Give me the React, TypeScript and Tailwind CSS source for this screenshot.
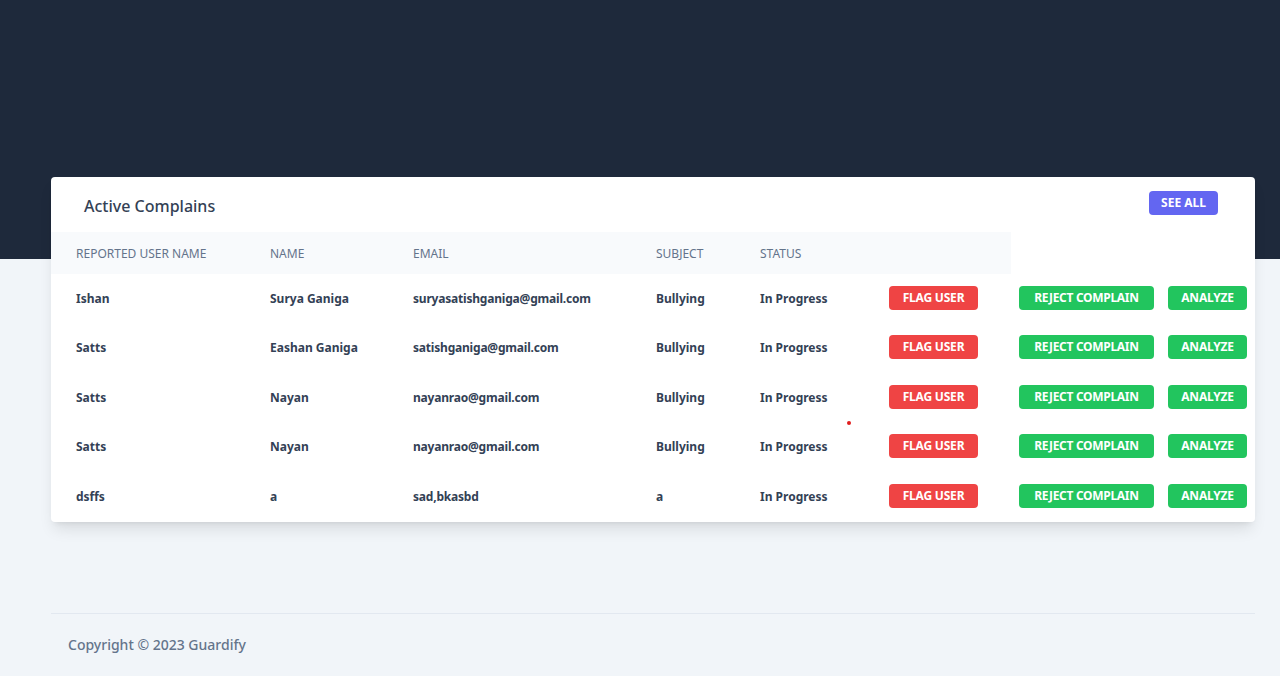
import React from "react";

type Complain = {
  reported: string;
  name: string;
  email: string;
  subject: string;
  status: string;
};

const complains: Complain[] = [
  { reported: "Ishan", name: "Surya Ganiga", email: "suryasatishganiga@gmail.com", subject: "Bullying", status: "In Progress" },
  { reported: "Satts", name: "Eashan Ganiga", email: "satishganiga@gmail.com", subject: "Bullying", status: "In Progress" },
  { reported: "Satts", name: "Nayan", email: "nayanrao@gmail.com", subject: "Bullying", status: "In Progress" },
  { reported: "Satts", name: "Nayan", email: "nayanrao@gmail.com", subject: "Bullying", status: "In Progress" },
  { reported: "dsffs", name: "a", email: "sad,bkasbd", subject: "a", status: "In Progress" },
];

const headers = ["Reported User Name", "Name", "Email", "Subject", "Status"];
const widths = ["w-[194px]", "w-[143px]", "w-[243px]", "w-[104px]", "w-[129px]"];

const App = () => {
  return (
    <div className="bg-[#f1f5f9] font-['Noto_Sans',sans-serif]">
      {/* dark header */}
      <div className="h-[259px] bg-[#1e293b]" />

      <div className="ml-[51px] mr-[25px] -mt-[82px]">
        {/* Card */}
        <div className="relative bg-white rounded shadow-lg">
          <div className="flex items-center justify-between h-[55px] pl-[33px] pr-[37px]">
            <h3 className="mt-[2px] text-[16px] font-medium text-[#334155]">Active Complains</h3>
            <button className="-mt-[3px] bg-[#6366f1] text-white text-xs font-bold uppercase px-3 h-6 w-[69px] rounded">
              See All
            </button>
          </div>

          <table className="border-collapse text-left">
            <thead>
              <tr className="h-[42px]">
                {headers.map((h, i) => (
                  <th
                    key={h}
                    className={`${widths[i]} bg-[#f8fafc] pl-[25px] pt-[2px] text-xs font-normal uppercase text-[#64748b] whitespace-nowrap align-middle`}
                  >
                    {h}
                  </th>
                ))}
                <th className="w-[147px] bg-[#f8fafc]" />
                <th />
              </tr>
            </thead>
            <tbody>
              {complains.map((c, idx) => (
                <tr key={idx} className="h-[49.5px]">
                  <td className="pl-[25px] text-xs font-bold text-[#334155] whitespace-nowrap">{c.reported}</td>
                  <td className="pl-[25px] text-xs font-bold text-[#334155] whitespace-nowrap">{c.name}</td>
                  <td className="pl-[25px] text-xs font-bold text-[#334155] whitespace-nowrap tracking-[-0.2px]">{c.email}</td>
                  <td className="pl-[25px] text-xs font-bold text-[#334155] whitespace-nowrap">{c.subject}</td>
                  <td className="pl-[25px] text-xs font-bold text-[#334155] whitespace-nowrap">{c.status}</td>
                  <td className="pl-[25px]">
                    <div className="flex -mt-[2px]">
                      <button className="h-6 w-[89px] bg-[#ef4444] text-white text-xs font-bold uppercase rounded whitespace-nowrap tracking-[-0.2px]">
                        Flag User
                      </button>
                    </div>
                  </td>
                  <td className="pl-[8px] pr-2">
                    <div className="flex gap-[14px] -mt-[2px]">
                      <button className="h-6 w-[135px] bg-[#22c55e] text-white text-xs font-bold uppercase rounded whitespace-nowrap tracking-[-0.3px]">
                        Reject Complain
                      </button>
                      <button className="h-6 w-[79px] bg-[#22c55e] text-white text-xs font-bold uppercase rounded whitespace-nowrap tracking-[-0.2px]">
                        Analyze
                      </button>
                    </div>
                  </td>
                </tr>
              ))}
            </tbody>
          </table>

          {/* stray red dot */}
          <span className="absolute left-[796px] top-[244px] w-1 h-1 rounded-full bg-[#e11d1d]" />
        </div>

        {/* Footer */}
        <footer className="pt-[91px]">
          <hr className="border-t border-[#e2e8f0]" />
          <div className="pl-[17px] h-[62px] flex items-center">
            <span className="text-sm font-medium text-[#64748b]">Copyright © 2023 Guardify</span>
          </div>
        </footer>
      </div>
    </div>
  );
};

export default App;
